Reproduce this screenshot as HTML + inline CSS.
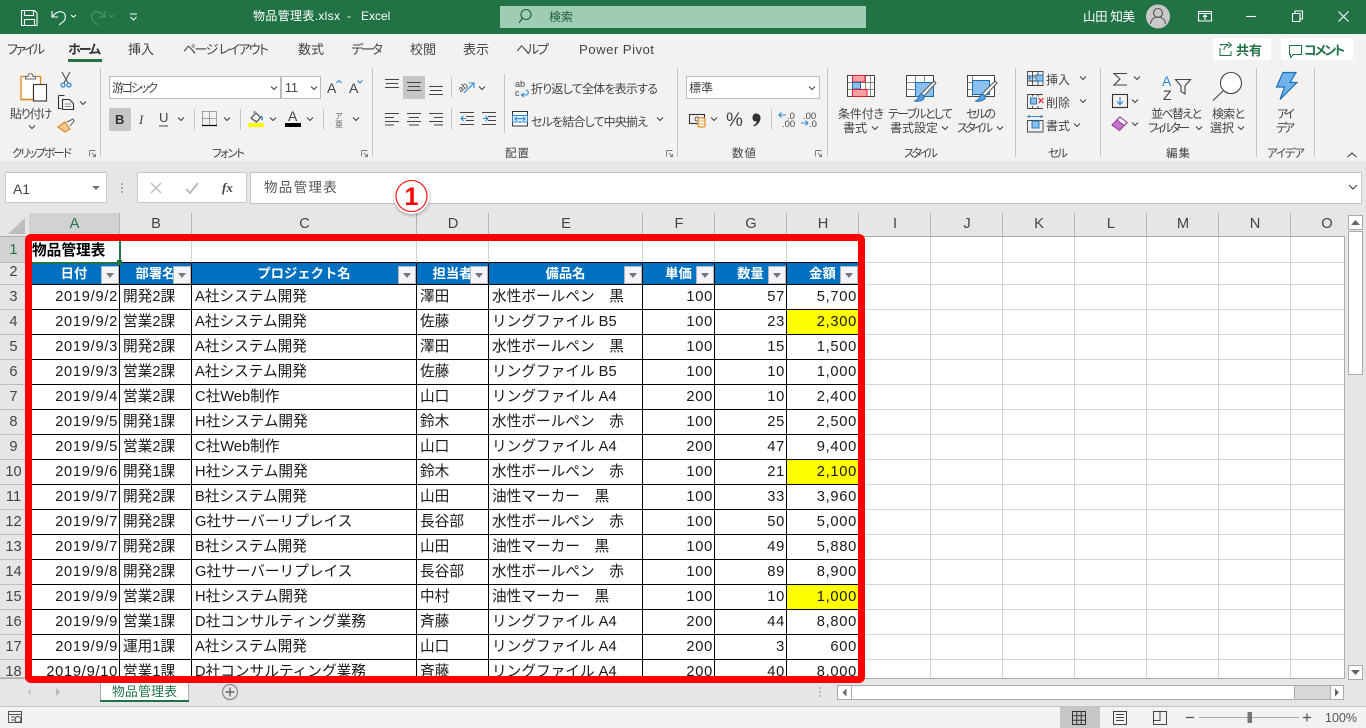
<!DOCTYPE html>
<html lang="ja"><head><meta charset="utf-8"><title>物品管理表.xlsx - Excel</title>
<style>
html,body{margin:0;padding:0;width:1366px;height:728px;overflow:hidden;background:#e6e6e6;font-family:"Liberation Sans","Noto Sans CJK JP",sans-serif}
.a{position:absolute}
.ch{position:absolute;top:213px;height:23px;line-height:23px;text-align:center;font-size:14.67px;color:#444;box-shadow:inset -1px 0 0 #b4b4b4}
.rh{position:absolute;left:0;width:28px;text-align:center;font-size:14.67px;color:#444;background:#e6e6e6;border-bottom:1px solid #bdbdbd;box-sizing:border-box;border-right:1px solid #b4b4b4}
table{border-collapse:separate;border-spacing:0;table-layout:fixed;position:absolute;left:29px;top:237px;width:830px;background:#fff}
td{box-sizing:border-box;padding:0 3px;height:25px;line-height:22px;font-size:14.67px;color:#1a1a1a;border-right:1px solid #000;border-bottom:1px solid #000;white-space:nowrap;overflow:hidden}
td.r{text-align:right;padding:0 1px 0 0;letter-spacing:.72px}
td.y{background:#ff0}
tr.h td{height:22px;background:#0070c0;color:#fff;font-weight:700;font-size:13.33px;text-align:center;line-height:20px;position:relative;overflow:visible;padding:0}
tr.t td{height:26px;border-color:#d4d4d4;border-bottom:1px solid #000}
tr.t td:first-child{font-weight:700;color:#000;overflow:visible;padding:4px 0 0 3px;line-height:21px;border-right:0}
b.f{position:absolute;right:0;bottom:0;width:16px;height:16px;background:#f2f4f8;border:1px solid #b4b8c0;box-sizing:content-box;margin:0}
b.f:after{content:"";position:absolute;left:4px;top:6px;border:4px solid transparent;border-top:5px solid #777;border-bottom:0}
svg text{font-family:"Liberation Sans","Noto Sans CJK JP",sans-serif;font-size:12px;fill:#444;font-feature-settings:"palt"}
</style></head><body>
<div class="a" style="left:0;top:0;width:1366px;height:34px;background:#217346"></div>
<div class="a" style="left:0;top:34px;width:1366px;height:127px;background:#f3f2f1"></div>
<div class="a" style="left:500px;top:6px;width:366px;height:22px;background:#9fcdb3"></div>
<div class="a" style="left:1213px;top:38px;width:58px;height:22px;background:#fff;border-radius:2px"></div>
<div class="a" style="left:1281px;top:38px;width:72px;height:22px;background:#fff;border-radius:2px"></div>
<!-- formula bar -->
<div class="a" style="left:5px;top:172px;width:100px;height:29px;background:#fff;border:1px solid #c6c6c6"></div>
<div class="a" style="left:137px;top:172px;width:108px;height:29px;background:#fff;border:1px solid #c6c6c6"></div>
<div class="a" style="left:250px;top:172px;width:1110px;height:30px;background:#fff;border:1px solid #c6c6c6"></div>
<!-- sheet -->
<div class="a" style="left:29px;top:237px;width:1315px;height:441px;background:#fff"></div>
<div class="a" style="left:859px;top:237px;width:485px;height:441px;background-image:repeating-linear-gradient(90deg,transparent 0 71px,#d4d4d4 71px 72px)"></div>
<div class="a" style="left:859px;top:285px;width:485px;height:393px;background-image:repeating-linear-gradient(180deg,transparent 0 24px,#d4d4d4 24px 25px)"></div>
<div class="a" style="left:859px;top:262px;width:485px;height:1px;background:#d4d4d4"></div>
<div class="a" style="left:859px;top:284px;width:485px;height:1px;background:#d4d4d4"></div>
<div class="a" style="left:1344px;top:237px;width:1px;height:442px;background:#ababab"></div>
<div class="a" style="left:0;top:678px;width:1345px;height:1px;background:#ababab"></div>
<div class="a" style="left:0;top:236px;width:1345px;height:1px;background:#ababab;z-index:1"></div>
<!-- column headers -->
<div class="ch" style="left:29px;width:91px;background:#d2d2d2;color:#217346">A</div>
<div class="ch" style="left:120px;width:72px">B</div>
<div class="ch" style="left:192px;width:225px">C</div>
<div class="ch" style="left:417px;width:72px">D</div>
<div class="ch" style="left:489px;width:154px">E</div>
<div class="ch" style="left:643px;width:72px">F</div>
<div class="ch" style="left:715px;width:72px">G</div>
<div class="ch" style="left:787px;width:72px">H</div>
<div class="ch" style="left:859px;width:72px">I</div>
<div class="ch" style="left:931px;width:72px">J</div>
<div class="ch" style="left:1003px;width:72px">K</div>
<div class="ch" style="left:1075px;width:72px">L</div>
<div class="ch" style="left:1147px;width:72px">M</div>
<div class="ch" style="left:1219px;width:72px">N</div>
<div class="ch" style="left:1291px;width:72px">O</div>
<!-- row headers -->
<div class="rh" style="top:237px;height:26px;line-height:26px;background:#d2d2d2;color:#217346;padding-left:0">1</div>
<div class="rh" style="top:263px;height:22px;line-height:19px">2</div>
<div class="rh" style="top:285px;height:25px;line-height:24px">3</div>
<div class="rh" style="top:310px;height:25px;line-height:24px">4</div>
<div class="rh" style="top:335px;height:25px;line-height:24px">5</div>
<div class="rh" style="top:360px;height:25px;line-height:24px">6</div>
<div class="rh" style="top:385px;height:25px;line-height:24px">7</div>
<div class="rh" style="top:410px;height:25px;line-height:24px">8</div>
<div class="rh" style="top:435px;height:25px;line-height:24px">9</div>
<div class="rh" style="top:460px;height:25px;line-height:24px">10</div>
<div class="rh" style="top:485px;height:25px;line-height:24px">11</div>
<div class="rh" style="top:510px;height:25px;line-height:24px">12</div>
<div class="rh" style="top:535px;height:25px;line-height:24px">13</div>
<div class="rh" style="top:560px;height:25px;line-height:24px">14</div>
<div class="rh" style="top:585px;height:25px;line-height:24px">15</div>
<div class="rh" style="top:610px;height:25px;line-height:24px">16</div>
<div class="rh" style="top:635px;height:25px;line-height:24px">17</div>
<div class="rh" style="top:660px;height:18px;line-height:24px;overflow:hidden">18</div>
<!-- table -->
<div class="a" style="left:0;top:0;width:1366px;height:678px;overflow:hidden">
<table><colgroup><col style="width:91px"><col style="width:72px"><col style="width:225px"><col style="width:72px"><col style="width:154px"><col style="width:72px"><col style="width:72px"><col style="width:72px"></colgroup>
<tr class="t"><td>物品管理表</td><td></td><td></td><td></td><td></td><td></td><td></td><td></td></tr>
<tr class="h"><td>日付<b class="f"></b></td><td>部署名<b class="f"></b></td><td>プロジェクト名<b class="f"></b></td><td>担当者<b class="f"></b></td><td>備品名<b class="f"></b></td><td>単価<b class="f"></b></td><td>数量<b class="f"></b></td><td>金額<b class="f"></b></td></tr>
<tr><td class="r">2019/9/2</td><td>開発2課</td><td>A社システム開発</td><td>澤田</td><td>水性ボールペン　黒</td><td class="r">100</td><td class="r">57</td><td class="r">5,700</td></tr>
<tr><td class="r">2019/9/2</td><td>営業2課</td><td>A社システム開発</td><td>佐藤</td><td>リングファイル B5</td><td class="r">100</td><td class="r">23</td><td class="r y">2,300</td></tr>
<tr><td class="r">2019/9/3</td><td>開発2課</td><td>A社システム開発</td><td>澤田</td><td>水性ボールペン　黒</td><td class="r">100</td><td class="r">15</td><td class="r">1,500</td></tr>
<tr><td class="r">2019/9/3</td><td>営業2課</td><td>A社システム開発</td><td>佐藤</td><td>リングファイル B5</td><td class="r">100</td><td class="r">10</td><td class="r">1,000</td></tr>
<tr><td class="r">2019/9/4</td><td>営業2課</td><td>C社Web制作</td><td>山口</td><td>リングファイル A4</td><td class="r">200</td><td class="r">10</td><td class="r">2,400</td></tr>
<tr><td class="r">2019/9/5</td><td>開発1課</td><td>H社システム開発</td><td>鈴木</td><td>水性ボールペン　赤</td><td class="r">100</td><td class="r">25</td><td class="r">2,500</td></tr>
<tr><td class="r">2019/9/5</td><td>営業2課</td><td>C社Web制作</td><td>山口</td><td>リングファイル A4</td><td class="r">200</td><td class="r">47</td><td class="r">9,400</td></tr>
<tr><td class="r">2019/9/6</td><td>開発1課</td><td>H社システム開発</td><td>鈴木</td><td>水性ボールペン　赤</td><td class="r">100</td><td class="r">21</td><td class="r y">2,100</td></tr>
<tr><td class="r">2019/9/7</td><td>開発2課</td><td>B社システム開発</td><td>山田</td><td>油性マーカー　黒</td><td class="r">100</td><td class="r">33</td><td class="r">3,960</td></tr>
<tr><td class="r">2019/9/7</td><td>開発2課</td><td>G社サーバーリプレイス</td><td>長谷部</td><td>水性ボールペン　赤</td><td class="r">100</td><td class="r">50</td><td class="r">5,000</td></tr>
<tr><td class="r">2019/9/7</td><td>開発2課</td><td>B社システム開発</td><td>山田</td><td>油性マーカー　黒</td><td class="r">100</td><td class="r">49</td><td class="r">5,880</td></tr>
<tr><td class="r">2019/9/8</td><td>開発2課</td><td>G社サーバーリプレイス</td><td>長谷部</td><td>水性ボールペン　赤</td><td class="r">100</td><td class="r">89</td><td class="r">8,900</td></tr>
<tr><td class="r">2019/9/9</td><td>営業2課</td><td>H社システム開発</td><td>中村</td><td>油性マーカー　黒</td><td class="r">100</td><td class="r">10</td><td class="r y">1,000</td></tr>
<tr><td class="r">2019/9/9</td><td>営業1課</td><td>D社コンサルティング業務</td><td>斉藤</td><td>リングファイル A4</td><td class="r">200</td><td class="r">44</td><td class="r">8,800</td></tr>
<tr><td class="r">2019/9/9</td><td>運用1課</td><td>A社システム開発</td><td>山口</td><td>リングファイル A4</td><td class="r">200</td><td class="r">3</td><td class="r">600</td></tr>
<tr><td class="r">2019/9/10</td><td>営業1課</td><td>D社コンサルティング業務</td><td>斉藤</td><td>リングファイル A4</td><td class="r">200</td><td class="r">40</td><td class="r">8,000</td></tr>
</table></div>
<!-- selection -->
<div class="a" style="left:119px;top:241px;width:2px;height:21px;background:#217346"></div>
<div class="a" style="left:32px;top:262px;width:88px;height:2px;background:#217346"></div>
<div class="a" style="left:117px;top:260px;width:5px;height:5px;background:#217346;border:0"></div>
<!-- scrollbars / tabs / status -->
<div class="a" style="left:1345px;top:213px;width:21px;height:468px;background:#e6e6e6"></div>
<div class="a" style="left:1348px;top:231px;width:15px;height:144px;background:#fff;border:1px solid #ababab;box-sizing:border-box"></div>
<div class="a" style="left:1348px;top:215px;width:15px;height:15px;background:#fff;border:1px solid #ababab;box-sizing:border-box"></div>
<div class="a" style="left:1348px;top:665px;width:15px;height:15px;background:#fff;border:1px solid #ababab;box-sizing:border-box"></div>
<div class="a" style="left:837px;top:685px;width:507px;height:15px;background:#d8d8d8;border:1px solid #ababab;box-sizing:border-box"></div>
<div class="a" style="left:851px;top:685px;width:444px;height:15px;background:#fff;border:1px solid #ababab;box-sizing:border-box"></div>
<div class="a" style="left:837px;top:685px;width:15px;height:15px;background:#fff;border:1px solid #ababab;box-sizing:border-box"></div>
<div class="a" style="left:1330px;top:685px;width:14px;height:15px;background:#fff;border:1px solid #ababab;box-sizing:border-box"></div>
<div class="a" style="left:100px;top:679px;width:89px;height:21px;background:#fff;border-left:1px solid #ababab;border-right:1px solid #ababab;box-sizing:border-box;border-bottom:0"></div>
<div class="a" style="left:100px;top:700px;width:89px;height:2px;background:#217346"></div>
<div class="a" style="left:0;top:706px;width:1366px;height:1px;background:#c6c6c6"></div>
<div class="a" style="left:0;top:707px;width:1366px;height:21px;background:#f3f2f1"></div>
<div class="a" style="left:1060px;top:707px;width:40px;height:21px;background:#c6c6c6"></div>
<!-- red frame -->
<div class="a" style="left:25px;top:234px;width:840px;height:449px;border:7px solid #f00;border-radius:6px;box-sizing:border-box;z-index:2"></div>

<svg class="a" style="left:0;top:0;z-index:3" width="1366" height="728" viewBox="0 0 1366 728" fill="none">
<defs><path id="c" d="M-3-1.5 0 1.5 3-1.5" stroke="#444" stroke-width="1.1" fill="none"/></defs>
<!-- title bar -->
<g stroke="#fff" stroke-width="1.1">
<path d="M21.5 10.5h13l2.500 2.500v12.500h-15.500z"/><path d="M24.500 10.500v5h9v-5M24.500 25.500v-6h10v6"/>
<path d="M52 11v6h6M52 17c3-4 7-6 10-5 4 1 4 6 2 9l-5 4"/><path d="M71 15l2.500 2 2.500-2"/>
<path d="M130 14h7M130.500 17l3 3 3-3" stroke-width="1"/>
</g>
<g stroke="#4d9a70" stroke-width="1.100"><path d="M105 11v6h-6M105 17c-3-4-7-6-10-5-4 1-4 6-2 9l5 4"/><path d="M109 15l2.500 2 2.500-2"/></g>
<text x="253" y="20" style="font-size:12px;fill:#fff" textLength="87">物品管理表.xlsx</text><text x="347" y="20" style="font-size:12px;fill:#fff">-</text><text x="361" y="20" style="font-size:12px;fill:#fff">Excel</text>
<circle cx="526" cy="14.500" r="5" stroke="#1d5f3a" stroke-width="1.100"/><path d="M522.500 18l-3.500 5" stroke="#1d5f3a" stroke-width="1.100"/>
<text x="549" y="21" style="font-size:12px;fill:#1d5f3a">検索</text>
<text x="1083" y="21" style="font-size:12.500px;fill:#fff" textLength="52">山田 知美</text>
<circle cx="1158" cy="16.500" r="12" fill="#c8c8c8"/><circle cx="1158" cy="13" r="4.500" stroke="#555" stroke-width="1.100"/><path d="M1150.500 24c.5-5 4-7 7.500-7s7 2 7.500 7" stroke="#555" stroke-width="1.100"/>
<g stroke="#fff" stroke-width="1.100"><path d="M1198.500 11.500h13v9.500h-13zM1198.500 13.500h13M1205 20v-4.500M1203 17l2-2 2 2"/>
<path d="M1246 16.500h10"/><path d="M1292.500 13.500h7.500v8h-7.500zM1295 13.500v-2.500h7.500v8h-2.500"/><path d="M1338.500 11.500l10 10M1348.500 11.500l-10 10"/></g>
<!-- tabs -->
<g style="font-size:13.300px">
<text x="7" y="54" style="font-size:13px" textLength="38">ファイル</text>
<text x="68" y="54" style="font-size:13px;font-weight:700;fill:#333" textLength="33">ホーム</text>
<text x="128" y="54" style="font-size:13px" textLength="26">挿入</text>
<text x="183" y="54" style="font-size:13px" textLength="86">ページ レイアウト</text>
<text x="298" y="54" style="font-size:13px" textLength="26">数式</text>
<text x="351" y="54" style="font-size:13px" textLength="32">データ</text>
<text x="410" y="54" style="font-size:13px" textLength="26">校閲</text>
<text x="463" y="54" style="font-size:13px" textLength="26">表示</text>
<text x="516" y="54" style="font-size:13px" textLength="33">ヘルプ</text>
<text x="579" y="54" style="font-size:13.300px" textLength="75">Power Pivot</text>
</g>
<rect x="68" y="59" width="34" height="3" fill="#217346"/>
<path d="M1221 46v-1M1220 44.500h8l-1 0M1220 48v7.500h11V51M1224 50c0-3 2-5 6-5M1228 42l3.500 3-3.500 3" stroke="#217346" stroke-width="1"/>
<text x="1236" y="55" style="font-size:13px;font-weight:700;fill:#217346">共有</text>
<path d="M1289.500 45.500h12v9h-8l-3 3v-3h-1z" stroke="#217346" stroke-width="1"/>
<text x="1304" y="55" style="font-size:13px;font-weight:700;fill:#217346" textLength="41">コメント</text>
<!-- group separators -->
<g fill="#c6c6c6"><rect x="100" y="68" width="1" height="89"/><rect x="372" y="68" width="1" height="89"/><rect x="677" y="68" width="1" height="89"/><rect x="827" y="68" width="1" height="89"/><rect x="1015" y="68" width="1" height="89"/><rect x="1100" y="68" width="1" height="89"/><rect x="1256" y="68" width="1" height="89"/><rect x="1314" y="68" width="1" height="89"/>
<rect x="194" y="109" width="1" height="21"/><rect x="240" y="109" width="1" height="21"/><rect x="323" y="109" width="1" height="21"/><rect x="451" y="77" width="1" height="21"/><rect x="451" y="108" width="1" height="22"/><rect x="504" y="74" width="1" height="59"/><rect x="771" y="109" width="1" height="21"/></g>
<!-- group labels -->
<g><text x="12" y="157" style="font-size:11.500px" textLength="60">クリップボード</text><text x="212" y="157" style="font-size:11.500px" textLength="33">フォント</text><text x="505" y="157" style="font-size:11.500px" textLength="24">配置</text><text x="732" y="157" style="font-size:11.500px" textLength="24">数値</text><text x="904" y="157" style="font-size:11.500px" textLength="34">スタイル</text><text x="1048" y="157" style="font-size:11.500px" textLength="20">セル</text><text x="1166" y="157" style="font-size:11.500px" textLength="24">編集</text><text x="1267" y="157" style="font-size:11.500px" textLength="38">アイデア</text></g>
<g stroke="#777" stroke-width=".9"><path d="M89.500 150.500h6M89.500 150.500v6M92 153l3.500 3.500M95.500 154v2.500h-2.500"/><path d="M361.500 150.500h6M361.500 150.500v6M364 153l3.500 3.500M367.500 154v2.500h-2.500"/><path d="M666.500 150.500h6M666.500 150.500v6M669 153l3.500 3.500M672.500 154v2.500h-2.500"/><path d="M815.500 150.500h6M815.500 150.500v6M818 153l3.500 3.500M821.500 154v2.500h-2.500"/></g>
<path d="M1347.500 157l4.500-4 4.500 4" stroke="#444" stroke-width="1.100"/>
<!-- clipboard -->
<path d="M21 76.500h19.500v10h-7v13H21z" fill="#fff" stroke="#e08a1e" stroke-width="1.300"/><path d="M21 99.500h12.500" stroke="#e08a1e" stroke-width="1.500"/>
<path d="M25.500 79v-2.500h2.500c0-4 5-4 5 0h2.500V79z" fill="#f3f2f1" stroke="#666"/>
<rect x="33.500" y="84.500" width="13" height="16.500" fill="#fff" stroke="#333" stroke-width="1.100"/>
<text x="10" y="118" style="font-size:12px" textLength="42">貼り付け</text><use href="#c" x="32" y="127"/>
<path d="M62 72l6 11M70 72l-6 11" stroke="#444"/><circle cx="63" cy="85" r="2" stroke="#2b88d8" stroke-width="1.300"/><circle cx="69" cy="85" r="2" stroke="#2b88d8" stroke-width="1.300"/>
<path d="M58.500 95.500h6M58.500 95.500v13h3M62.500 99.500h7l4 4v6h-11z" stroke="#333" stroke-width="1.100"/><path d="M65 104h6M65 106.500h6" stroke="#666" stroke-width=".8"/><use href="#c" x="83" y="103"/>
<path d="M58 127l7-5 5 7-5 3z" fill="#f6c89a" stroke="#e08a1e" stroke-width="1.200"/><path d="M67 122l6-3 1 2-4 5" fill="#fff" stroke="#555" stroke-width="1"/>
<!-- font -->
<rect x="109.500" y="76.500" width="171" height="22" fill="#fff" stroke="#bdbdbd"/><rect x="281.500" y="76.500" width="39" height="22" fill="#fff" stroke="#bdbdbd"/>
<text x="112" y="92" style="font-size:12px" textLength="46">游ゴシック</text><text x="285" y="92" style="font-size:12.500px" textLength="13">11</text>
<use href="#c" x="274" y="88"/><use href="#c" x="314" y="88"/>
<text x="327" y="93" style="font-size:14px">A</text><path d="M336.500 83l2.500-2.500 2.500 2.500" stroke="#2b88d8" stroke-width="1"/>
<text x="349" y="93" style="font-size:14px">A</text><path d="M357.500 80.500l2.500 2.500 2.500-2.500" stroke="#2b88d8" stroke-width="1"/>
<rect x="109" y="108" width="22" height="23" fill="#c6c6c6"/><text x="115" y="124" style="font-size:13px;font-weight:700;fill:#333">B</text>
<text x="139" y="124" style="font-size:13px;font-style:italic;font-family:'Liberation Serif',serif">I</text><text x="159" y="122" style="font-size:13px">U</text><path d="M159 126h9" stroke="#444"/><use href="#c" x="181" y="119"/>
<path d="M202.500 111.500h14v14" stroke="#555" stroke-width="1" stroke-dasharray="1 1"/><path d="M202.500 111.500v14M209.500 111.500v14M202.500 118.500h14" stroke="#555" stroke-dasharray="1 1"/><path d="M202 125.500h15" stroke="#000" stroke-width="1.200"/><use href="#c" x="227" y="119"/>
<path d="M251 118l5-5 4.500 4.500-4 4.500z" stroke="#444" stroke-width="1.100"/><path d="M254 113l1-2" stroke="#444"/><path d="M261 116c1.500 1.500 1.500 3 .5 4" stroke="#2b88d8" stroke-width="1.500"/><rect x="248" y="123" width="16" height="4" fill="#ff0"/><use href="#c" x="273" y="119"/>
<text x="288" y="121" style="font-size:14px">A</text><rect x="285" y="123" width="16" height="4" fill="#000"/><use href="#c" x="310" y="119"/>
<text x="335" y="119" style="font-size:8px;fill:#666">ア</text><text x="335" y="127" style="font-size:8px;fill:#666">亜</text><use href="#c" x="356" y="119"/>
<!-- alignment -->
<rect x="403" y="76" width="22" height="23" fill="#c6c6c6"/>
<g stroke="#444"><path d="M385 79.500h14M386 83.500h12M385 87.500h14"/><path d="M407 82.500h14M408 86.500h12M407 90.500h14"/><path d="M429 86.500h14M430 90.500h12M429 94.500h14"/>
<path d="M385 113.500h14M385 117.500h9M385 121.500h14M385 125h9"/><path d="M407 113.500h14M409 117.500h10M407 121.500h14M409 125h10"/><path d="M429 113.500h14M434 117.500h9M429 121.500h14M434 125h9"/></g>
<text x="458" y="91" style="font-size:9px;fill:#444" transform="rotate(-40 462 88)">ab</text><path d="M464 93l10-10M469 83h5v5" stroke="#2b88d8" stroke-width="1.100"/><use href="#c" x="482" y="88"/>
<g stroke="#444"><path d="M460 112.500h14M466 116.500h8M466 120.500h8M460 124.500h14M482 112.500h14M488 116.500h8M488 120.500h8M482 124.500h14"/></g>
<path d="M466 118.500h-5M463.500 116l-2.500 2.500 2.500 2.500M483 118.500h5M485.500 116l2.500 2.500-2.500 2.500" stroke="#2b88d8" stroke-width="1.100"/>
<text x="515" y="87" style="font-size:9px">ab</text><text x="515" y="96" style="font-size:9px;">c</text><path d="M526 90h0c3 0 3 5 0 5h-4M524 93l-2.500 2 2.500 2" stroke="#2b88d8" stroke-width="1.100"/>
<text x="531" y="93" style="font-size:12px" textLength="127">折り返して全体を表示する</text>
<rect x="512.500" y="111.500" width="15" height="14.500" fill="#fff" stroke="#333"/><rect x="512.500" y="115.500" width="15" height="6.500" fill="#dcebf8" stroke="#2b88d8"/><path d="M515 118.800h10M517 117l-2 1.800 2 1.800M523 117l2 1.800-2 1.800" stroke="#2b88d8"/>
<text x="531" y="126" style="font-size:12px" textLength="117">セルを結合して中央揃え</text><use href="#c" x="660" y="119"/>
<!-- number -->
<rect x="686.500" y="76.500" width="133" height="22" fill="#fff" stroke="#bdbdbd"/><text x="689" y="92" style="font-size:12px" textLength="24">標準</text><use href="#c" x="812" y="88"/>
<rect x="689.500" y="114.500" width="15" height="9" stroke="#333" stroke-width="1.100"/><circle cx="697" cy="119" r="2" stroke="#333" stroke-width=".8"/><rect x="698" y="118" width="7" height="9" rx="1.500" fill="#fff" stroke="#e08a1e" stroke-width="1.200"/><path d="M698 121h7M698 124h7" stroke="#e08a1e" stroke-width=".8"/><use href="#c" x="714" y="119"/>
<text x="726" y="126" style="font-size:19px">%</text><path d="M756 113.500c3 0 4.500 2 4.500 4.500 0 4-3 7-6.500 8.500l-.7-1c2-1.200 3.200-2.500 3.500-4-2.200.3-4.300-1-4.300-3.800 0-2.500 1.800-4.200 3.500-4.200z" fill="#333"/>
<text x="787" y="119" style="font-size:9.500px">.0</text><text x="782" y="127" style="font-size:9.500px">.00</text><path d="M779 115h7M781.500 112.500l-2.500 2.500 2.500 2.500" stroke="#2b88d8" stroke-width="1.100"/>
<text x="803" y="119" style="font-size:9.500px">.00</text><text x="809" y="127" style="font-size:9.500px">.0</text><path d="M801 123h7M805.500 120.500l2.500 2.500-2.500 2.500" stroke="#2b88d8" stroke-width="1.100"/>
<!-- style icons -->
<g stroke="#444" stroke-width="1"><rect x="847.500" y="75.500" width="27" height="21" fill="#fff"/><path d="M847.500 82.500h27M847.500 89.500h27M856.500 75.500v21M865.500 75.500v21M870.500 75.500v21" stroke="#888"/><rect x="847.500" y="75.500" width="27" height="21"/></g>
<rect x="852.500" y="75.500" width="12.500" height="6.500" fill="#f9a0a6" stroke="#e01f26"/><rect x="852.500" y="82.500" width="8" height="6.500" fill="#8cc0ec" stroke="#1a6fb8"/><rect x="852.500" y="89.500" width="14.500" height="7" fill="#f9a0a6" stroke="#e01f26"/>
<g stroke="#444"><rect x="906.500" y="75.500" width="27" height="21" fill="#fff"/><path d="M906.500 82.500h27M906.500 89.500h27M915.500 75.500v21M924.500 75.500v21" stroke="#888"/></g><rect x="915.500" y="82.500" width="18" height="14" fill="#8cc0ec" stroke="#1a6fb8"/>
<path d="M921 94l13-13 2 2-12 13z" fill="#fff" stroke="#555"/><path d="M914 101c3 0 4-2 5-5 1-2 4-2 5 0 1 3-2 6-10 5z" fill="#5a9fdc" stroke="#1a6fb8"/>
<g stroke="#444"><rect x="967.500" y="75.500" width="27" height="21" fill="#fff"/><path d="M967.500 82.500h5M967.500 89.500h5M972.500 75.500v21" stroke="#888"/></g><rect x="972.500" y="80.500" width="17" height="14" fill="#8cc0ec" stroke="#1a6fb8"/>
<path d="M982 94l13-13 2 2-12 13z" fill="#fff" stroke="#555"/><path d="M975 101c3 0 4-2 5-5 1-2 4-2 5 0 1 3-2 6-10 5z" fill="#5a9fdc" stroke="#1a6fb8"/>
<text x="838" y="118" style="font-size:12px" textLength="46">条件付き</text><text x="843" y="132" style="font-size:12px" textLength="24">書式</text><use href="#c" x="875" y="128"/>
<text x="888" y="118" style="font-size:12px" textLength="65">テーブルとして</text><text x="890" y="132" style="font-size:12px" textLength="48">書式設定</text><use href="#c" x="945" y="128"/>
<text x="966" y="118" style="font-size:12px" textLength="30">セルの</text><text x="957" y="132" style="font-size:12px" textLength="36">スタイル</text><use href="#c" x="1000" y="128"/>
<!-- cells -->
<g stroke="#444"><path d="M1027.500 71.500h15.500v14h-15.500zM1032.500 71.500v14M1038 71.500v14M1027.500 76h15.500M1027.500 81h15.500" stroke-width=".9"/></g><rect x="1036" y="75" width="7" height="6" fill="#8cc0ec" stroke="#1a6fb8" stroke-width=".9"/><path d="M1035 78h-6M1031 75.500l-2.500 2.500 2.500 2.500" stroke="#2b88d8" stroke-width="1.100"/>
<text x="1046" y="84" style="font-size:12px" textLength="24">挿入</text><use href="#c" x="1083" y="78"/>
<path d="M1027.500 94.500h15.500M1027.500 108.500h15.500M1032.500 94.500v2M1038 94.500v2M1032.500 106v2.500M1038 106v2.500M1027.500 94.500v14" stroke="#444" stroke-width=".9"/><rect x="1030.500" y="98" width="6" height="6" fill="#8cc0ec" stroke="#1a6fb8" stroke-width=".9"/><path d="M1038.500 98l5 5M1043.500 98l-5 5" stroke="#e8383e" stroke-width="1.300"/>
<text x="1046" y="107" style="font-size:12px" textLength="24">削除</text><use href="#c" x="1083" y="101"/>
<path d="M1027.500 120.500h15.500v11.500h-15.500zM1027.500 116.500h15.500" stroke="#444" stroke-width=".9"/><rect x="1032" y="121" width="7" height="7" fill="#8cc0ec" stroke="#1a6fb8" stroke-width=".9"/><path d="M1029 116.500h12M1029 115v3M1041 115v3" stroke="#2b88d8"/>
<text x="1046" y="130" style="font-size:12px" textLength="24">書式</text><use href="#c" x="1077" y="125"/>
<!-- editing -->
<path d="M1127 73.500h-13l6 5.500-6 6h13" stroke="#444" stroke-width="1.100"/><use href="#c" x="1137" y="78"/>
<rect x="1112.500" y="94.500" width="15" height="13" stroke="#333" stroke-width="1.100"/><path d="M1120 97v7M1117 101.500l3 3 3-3" stroke="#2b88d8" stroke-width="1.200"/><use href="#c" x="1135" y="101"/>
<path d="M1112 125l8-8 7 5.500-7.500 8z" fill="#c874cc" stroke="#9b3ea0" stroke-width="1.100"/><path d="M1117 120l3-3 7 5.500-3 3z" fill="#fff" stroke="#9b3ea0" stroke-width="1.100"/><use href="#c" x="1135" y="124"/>
<text x="1162" y="86" style="font-size:14px;fill:#2b88d8">A</text><text x="1163" y="100" style="font-size:14px">Z</text>
<path d="M1175.500 79.500h15l-5.500 6.500v8l-4-2.500v-5.500z" stroke="#444" stroke-width="1.100"/>
<circle cx="1231" cy="83" r="10.500" fill="#fff" stroke="#444" stroke-width="1.100"/><path d="M1223.500 90.500L1213 100.500" stroke="#444" stroke-width="1.100"/>
<text x="1151" y="118" style="font-size:12px" textLength="51">並べ替えと</text><text x="1148" y="132" style="font-size:12px" textLength="42">フィルター</text><use href="#c" x="1199" y="128"/>
<text x="1212" y="118" style="font-size:12px" textLength="33">検索と</text><text x="1210" y="132" style="font-size:12px" textLength="24">選択</text><use href="#c" x="1241" y="128"/>
<!-- ideas -->
<path d="M1283 72.500h13l-6 10h7l-17 17 4.500-12.500h-8z" fill="#6fb3ea" stroke="#1a6fb8" stroke-width="1.200"/>
<text x="1277" y="118" style="font-size:12px" textLength="18">アイ</text><text x="1276" y="132" style="font-size:12px" textLength="19">デア</text>
<!-- formula bar contents -->
<text x="13" y="194" style="font-size:14px" textLength="17">A1</text><path d="M92 186h8l-4 4z" fill="#777"/>
<g fill="#aaa"><rect x="121" y="183" width="2" height="2"/><rect x="121" y="187" width="2" height="2"/><rect x="121" y="191" width="2" height="2"/></g>
<path d="M151 183l10 10M161 183l-10 10" stroke="#bbb" stroke-width="1.400"/><path d="M186 189l4 4 8-10" stroke="#bbb" stroke-width="2"/>
<text x="222" y="192" style="font-size:13px;font-style:italic;font-weight:700;font-family:'Liberation Serif',serif;fill:#444">fx</text>
<text x="264" y="192" style="font-size:13.500px;letter-spacing:1.300px;fill:#555;font-feature-settings:normal">物品管理表</text>
<path d="M1349 185l4 4 4-4" stroke="#444" stroke-width="1.200"/>
<!-- corner -->
<path d="M25 218v16H8z" fill="#bdbdbd"/>
<!-- callout -->
<circle cx="412" cy="198" r="19.500" fill="#000" opacity=".08"/><circle cx="411.500" cy="197" r="18.500" fill="#000" opacity=".1"/><circle cx="411.500" cy="196" r="18" fill="#fff"/><circle cx="411.500" cy="196" r="15.500" stroke="#f00" stroke-width="1.100"/>
<text x="411.500" y="205" text-anchor="middle" style="font-size:25px;font-weight:700;fill:#f00">1</text>
<!-- scroll arrows -->
<path d="M1351 225h9l-4.500-5z" fill="#666"/><path d="M1351 670h9l-4.500 5z" fill="#666"/><path d="M846.500 688.500v8l-4-4z" fill="#666"/><path d="M1335 688.500v8l4-4z" fill="#666"/>
<path d="M31 688v8l-4-4z" fill="#ccc"/><path d="M56 688v8l4-4z" fill="#bbb"/>
<text x="112" y="696" style="font-size:12.800px;fill:#217346;font-feature-settings:normal" textLength="65">物品管理表</text>
<circle cx="230" cy="692" r="7.500" stroke="#888" stroke-width="1.200"/><path d="M225.500 692h9M230 687.500v9" stroke="#666" stroke-width="1.400"/>
<g fill="#bbb"><rect x="819" y="687" width="2" height="2"/><rect x="819" y="691" width="2" height="2"/><rect x="819" y="695" width="2" height="2"/></g>
<!-- status -->
<rect x="8.500" y="711.500" width="13" height="11" stroke="#555"/><path d="M8.500 714.500h13M11 717h4M11 720h4" stroke="#555"/><circle cx="18" cy="719.500" r="3" fill="#f3f2f1" stroke="#444"/>
<g stroke="#333"><path d="M1072.500 711.500h13v13h-13zM1076.800 711.500v13M1081.200 711.500v13M1072.500 715.800h13M1072.500 720.200h13" /></g>
<g stroke="#444"><rect x="1113.500" y="711.500" width="13" height="13"/><path d="M1116 714.500h8M1116 717.500h8M1116 720.500h8" stroke-width="1"/></g>
<g stroke="#444"><rect x="1153.500" y="711.500" width="13" height="13"/><path d="M1153.500 720.500h6.500v-9" /></g>
<path d="M1186 717.500h8M1303 717.500h8M1307 713.500v8" stroke="#555" stroke-width="1.200"/><path d="M1199 717.500h100" stroke="#aaa"/><rect x="1247.500" y="712" width="4.500" height="11" fill="#777"/>
<text x="1325" y="722" style="font-size:12.500px;fill:#555" textLength="32">100%</text>
</svg>
</body></html>
